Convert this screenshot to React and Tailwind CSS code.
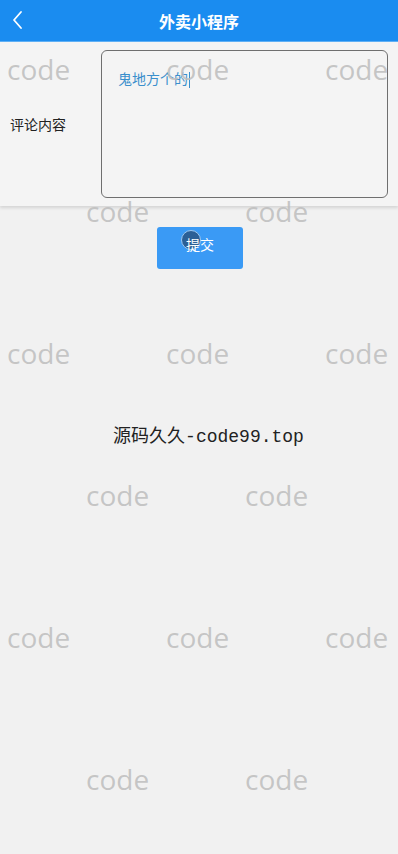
const marks = [
  { top: 55, left: [7, 166, 325] },
  { top: 197, left: [86, 245] },
  { top: 339, left: [7, 166, 325] },
  { top: 481, left: [86, 245] },
  { top: 623, left: [7, 166, 325] },
  { top: 765, left: [86, 245] },
];

export default function App() {
  return (
    <div className="relative w-[398px] h-[854px] overflow-hidden bg-[#f1f1f1] font-['Noto_Sans_CJK_SC',sans-serif]">
      {/* header */}
      <div className="relative flex items-center justify-center h-[42px] bg-[#1a8cf0] border-b border-[#5fb0f5]">
        <svg
          className="absolute left-[11px] top-[10px]"
          width="14"
          height="20"
          viewBox="0 0 14 20"
          fill="none"
          stroke="white"
          strokeWidth="1.8"
          strokeLinecap="round"
          strokeLinejoin="round"
        >
          <path d="M10 2 L3 10 L10 18" />
        </svg>
        <span className="text-white text-[16px] font-bold leading-none">外卖小程序</span>
      </div>

      {/* form */}
      <div className="flex items-center h-[164px] bg-[#f4f4f4] shadow-[0_2px_3px_rgba(0,0,0,0.12)]">
        <div className="w-[101px] pl-[10px] text-[14px] text-[#222]">评论内容</div>
        <div className="w-[287px] h-[148px] border border-[#6f6f6f] rounded-[6px] px-[16px] pt-[14px] bg-[#f4f4f4]">
          <span className="text-[14px] text-[#3a8fcc]">鬼地方个的</span>
          <span className="inline-block w-px h-[16px] bg-[#3a8fcc] align-middle ml-px" />
        </div>
      </div>

      {/* button */}
      <div className="flex justify-center pt-[21px]">
        <button className="relative w-[86px] h-[42px] ml-[2px] bg-[#3a9af5] rounded-[3px] text-white text-[14px] flex items-center justify-center pb-[7px]">
          <span className="absolute left-[24px] top-[3px] w-[20px] h-[20px] rounded-full bg-[#2b5f96] border border-[#9ec7ee]" />
          <span className="relative">提交</span>
        </button>
      </div>

      <div className="mt-[155px] pl-[19px] text-center text-[18px] text-[#222] font-['Liberation_Mono','Noto_Sans_CJK_SC',monospace]">
        源码久久-code99.top
      </div>

      {/* watermark */}
      {marks.map((row) =>
        row.left.map((x) => (
          <span
            key={row.top + "-" + x}
            className="absolute pointer-events-none text-[28px] leading-none text-[#bdbdbd]/85 font-['Open_Sans',sans-serif]"
            style={{ top: row.top, left: x }}
          >
            code
          </span>
        ))
      )}
    </div>
  );
}
